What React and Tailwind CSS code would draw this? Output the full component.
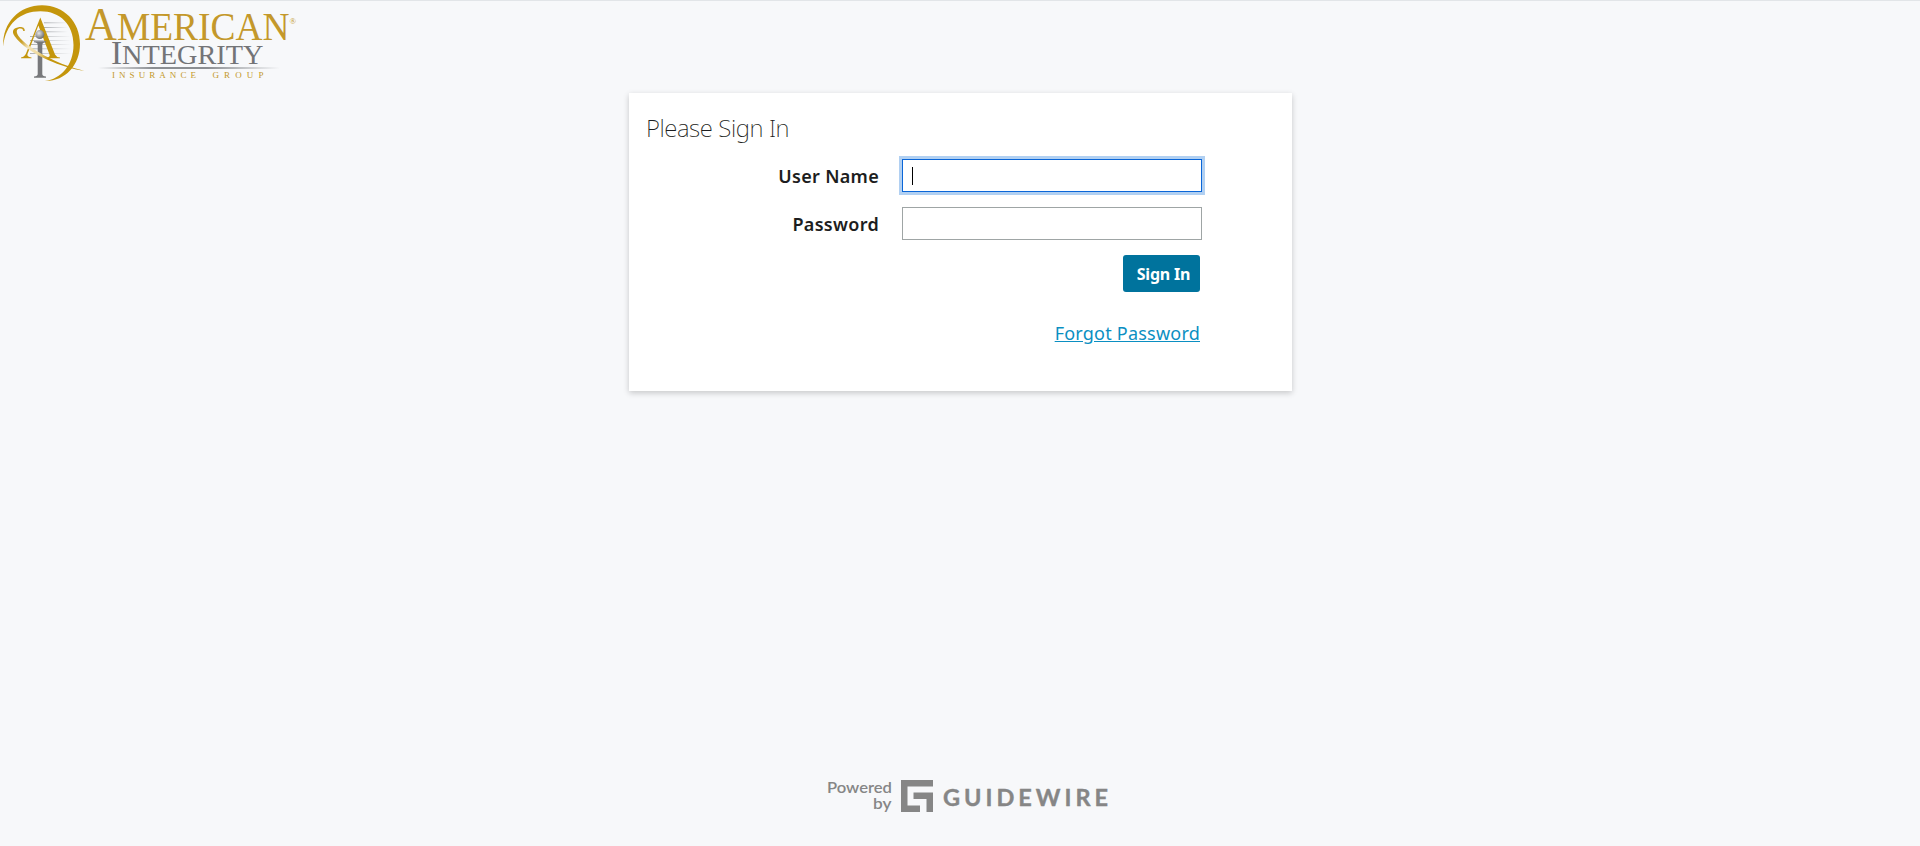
const SERIF = '"Liberation Serif", "Times New Roman", serif';

function Emblem() {
  return (
    <g>
      <defs>
        <linearGradient id="streak" x1="0" x2="1">
          <stop offset="0" stopColor="#8d9094" />
          <stop offset="1" stopColor="#8d9094" stopOpacity="0" />
        </linearGradient>
        <linearGradient id="swoosh" gradientUnits="userSpaceOnUse" x1="13" y1="30" x2="84" y2="71">
          <stop offset="0" stopColor="#c4960c" />
          <stop offset="0.16" stopColor="#c9a02a" />
          <stop offset="0.26" stopColor="#f3e3b5" />
          <stop offset="0.4" stopColor="#f0dca4" />
          <stop offset="0.55" stopColor="#c4960c" />
          <stop offset="1" stopColor="#c4960c" />
        </linearGradient>
        <radialGradient id="ball" cx="0.4" cy="0.35" r="0.65">
          <stop offset="0" stopColor="#e4e4e6" />
          <stop offset="1" stopColor="#6d6e71" />
        </radialGradient>
      </defs>
      <g fill="url(#streak)">
        {[22.5, 27, 31.5, 36, 40.2, 44.3, 48.5, 53].map((y, i) => (
          <rect key={y} x={i < 3 ? 44 : 30} y={y} width={i < 3 ? 24 : 41} height="0.7" />
        ))}
      </g>
      <path
        d="M3.2 46.5C2.2 22 20 5.3 42 5.3C64 5.3 80 22 80 44C80 65 65 81.5 45 81C61 79 73.5 65 73.5 45C73.5 24.5 60 11.3 40.5 11.3C20 11.3 5.5 24 3.2 46.5Z"
        fill="#c4960c"
      />
      <path
        d="M40.3 17.5L55 54.5Q56.3 57.2 60 57.4V58.3H46.5V57.4Q50.5 57.2 49.5 54.5L38.4 25.5L27.5 54Q26.5 57 31.5 57.4V58.3H21V57.4Q24.5 57 26 53.5Z"
        fill="#c4960c"
      />
      <path
        d="M34 41.3H46V42.3Q42.3 42.5 42.3 45V74Q42.3 76.4 46 76.6V77.8H34V76.6Q37.7 76.4 37.7 74V45Q37.7 42.5 34 42.3Z"
        fill="#77787b"
      />
      <circle cx="39.8" cy="34.6" r="4.5" fill="url(#ball)" />
      <path
        d="M24.8 31C25 27.5 22 26.8 18.5 27.2C13.5 28 11.2 31 14.5 36C20 44.5 35 54.5 48 60C60 65.5 72 69 84.5 71C71 67.5 60 63.5 50 58.3C36 51.3 23 42.8 18.3 35.7C15.3 30.8 17.2 28.4 20.5 28.5C22.5 28.6 23 29.7 23.2 31Z"
        fill="url(#swoosh)"
      />
    </g>
  );
}

function BrandLogo() {
  return (
    <svg width="300" height="90" viewBox="0 0 300 90" fontFamily={SERIF} role="img" aria-label="American Integrity Insurance Group">
      <Emblem />
      <defs>
        <linearGradient id="rule" x1="0" x2="1">
          <stop offset="0" stopColor="#8b8e92" stopOpacity="0" />
          <stop offset="0.3" stopColor="#8b8e92" />
          <stop offset="0.6" stopColor="#8b8e92" />
          <stop offset="1" stopColor="#8b8e92" stopOpacity="0" />
        </linearGradient>
      </defs>
      <g fill="#c4982b">
        <text x="85" y="40" fontSize="39" textLength="211" lengthAdjust="spacingAndGlyphs">
          <tspan fontSize="46">A</tspan>MERICAN<tspan fontSize="9" dy="-16.5">®</tspan>
        </text>
        <text x="112" y="78" fontSize="9" textLength="84" lengthAdjust="spacing">INSURANCE</text>
        <text x="212.5" y="78" fontSize="9" textLength="51" lengthAdjust="spacing">GROUP</text>
      </g>
      <text x="111" y="63.7" fontSize="28" textLength="152.5" lengthAdjust="spacingAndGlyphs" fill="#737477">
        <tspan fontSize="33">I</tspan>NTEGRITY
      </text>
      <rect x="98" y="67" width="182" height="2" fill="url(#rule)" />
    </svg>
  );
}

function Field({ label, type, focused }) {
  return (
    <label className="flex h-[33px] items-center">
      <span className="w-[250px] pt-px text-right text-[18px] leading-6 font-semibold tracking-[0.3px] text-[#1c1d20]">{label}</span>
      {focused ? (
        <span className="ml-[23px] flex h-[33px] w-[300px] items-center border border-[#0a66d8] bg-white pl-[9px] ring-3 ring-[#b1d0f2]">
          <span className="h-[18px] w-px bg-black" />
        </span>
      ) : (
        <input type={type} className="ml-[23px] h-[33px] w-[300px] border border-[#9fa5a5] bg-white px-2 outline-none" />
      )}
    </label>
  );
}

function PoweredBy() {
  return (
    <footer className="flex h-[38px] items-start pl-[824px]">
      <svg width="72" height="44" fill="#868686" fontFamily="Lato, sans-serif" fontWeight="600" fontSize="15.5">
        <text x="3" y="19" textLength="65" lengthAdjust="spacingAndGlyphs">Powered</text>
        <text x="49" y="35" textLength="18.5" lengthAdjust="spacingAndGlyphs">by</text>
      </svg>
      <svg className="mt-1.5 ml-[5px]" width="32" height="32" fill="#868686">
        <path d="M0 0H32V6.5H6.5V25.5H19V32H0Z" />
        <path d="M12.5 12.5H32V32H25.5V19H12.5Z" />
      </svg>
      <svg className="ml-[9px]" width="175" height="44" fill="#868686" fontFamily="Lato, sans-serif" fontWeight="700" fontSize="23.5">
        <text x="1" y="31.7" textLength="165" lengthAdjust="spacing" stroke="#868686" strokeWidth="0.4">GUIDEWIRE</text>
      </svg>
    </footer>
  );
}

export default function App() {
  return (
    <div className="flex h-[846px] w-full flex-col overflow-hidden border-t border-[#e2e5e8] bg-[#f7f8fa] font-['Noto_Sans',sans-serif]">
      <header className="-mt-px h-[93px]">
        <BrandLogo />
      </header>
      <main className="ml-[629px] flex h-[298px] w-[663px] flex-col bg-white pt-[19px] shadow-[0_2px_6px_rgba(0,0,0,0.2)]">
        <h1 className="pl-[17px] text-[24px] leading-8 font-extralight tracking-[-0.4px] text-[#1c1d20]">Please Sign In</h1>
        <form className="flex flex-col gap-[15px] pt-[15px]">
          <Field label="User Name" type="text" focused />
          <Field label="Password" type="password" />
          <div className="flex w-[571px] flex-col items-end">
            <button type="button" className="h-[37px] w-[77px] rounded-[3px] bg-[#00739d] pl-1 text-[16px] font-bold tracking-[-0.2px] text-white">
              Sign In
            </button>
            <a href="#" className="mt-[29px] text-[18px] leading-6 tracking-[0.22px] text-[#0b8fc2] underline">
              Forgot Password
            </a>
          </div>
        </form>
      </main>
      <div className="grow" />
      <div className="mb-[34px]">
        <PoweredBy />
      </div>
    </div>
  );
}
